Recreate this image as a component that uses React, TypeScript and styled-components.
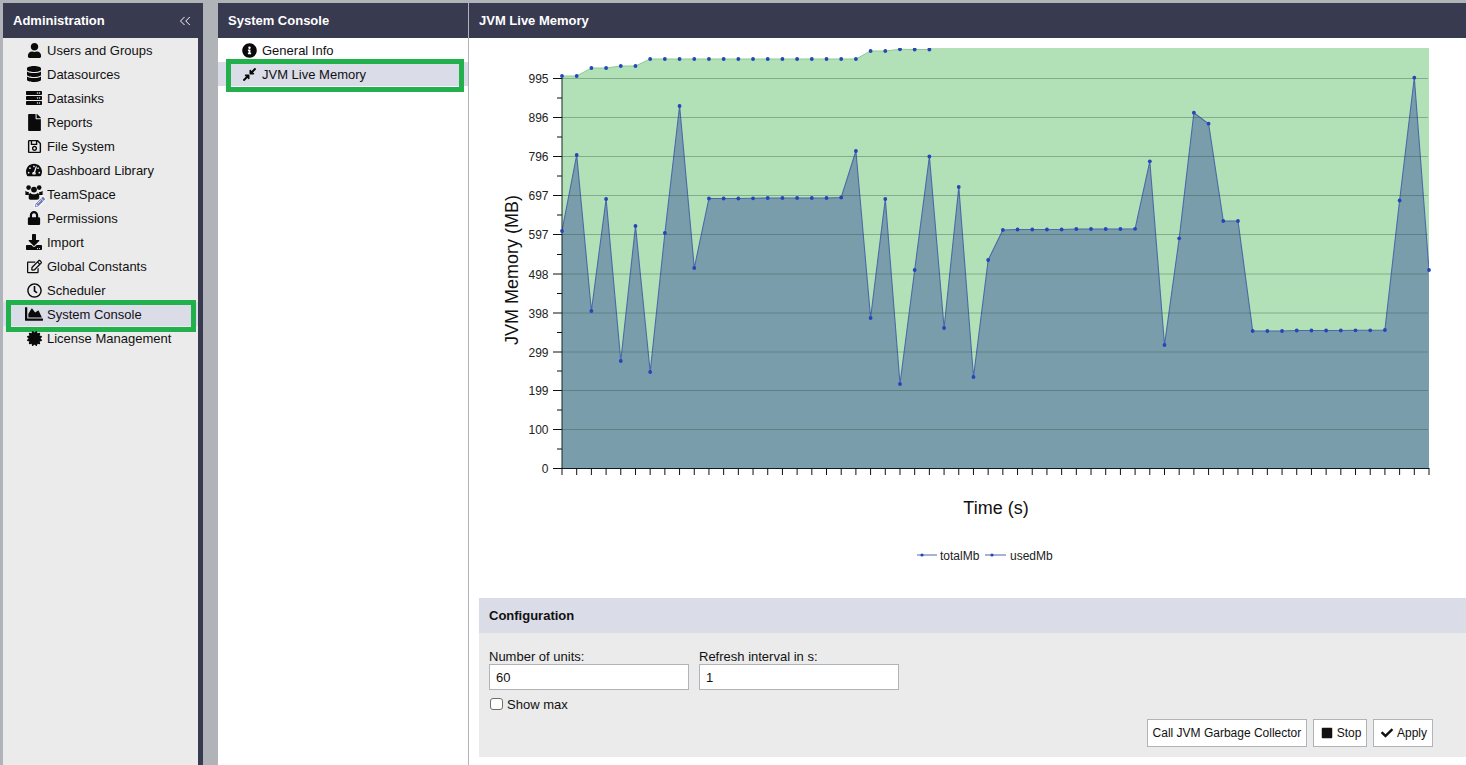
import React from "react";
import styled, { createGlobalStyle } from "styled-components";
import {
  FaUser, FaDatabase, FaServer, FaFile, FaRegSave, FaTachometerAlt, FaPencilAlt, FaLock,
  FaDownload, FaRegEdit, FaRegClock, FaChartArea, FaCertificate, FaInfoCircle, FaCompressAlt,
  FaStop, FaCheck,
} from "react-icons/fa";
import { ChevronsLeft } from "lucide-react";

const Global = createGlobalStyle`
  html, body { margin: 0; padding: 0; height: 765px; overflow: hidden; background: #b0b4b8; }
  body, input, button { font-family: "Liberation Sans", Arial, sans-serif; font-size: 13px; color: #111; }
  #root { height: 765px; }
`;

const Page = styled.div`
  display: flex;
  height: 762px;
  padding: 3px 0 0 3px;
`;
const Header = styled.div`
  height: 35px;
  flex: none;
  display: flex;
  align-items: center;
  justify-content: space-between;
  padding: 0 10px;
  background: #383a50;
  color: #fff;
  font-weight: 700;
  font-size: 13px;
`;
const CollapseBtn = styled.span`
  display: flex;
  margin-right: -1px;
  color: #fff;
`;
const AdminColumn = styled.aside`
  width: 200px;
  flex: none;
  display: flex;
  flex-direction: column;
  margin-right: 15px;
`;
const AdminList = styled.div`
  flex: 1;
  background: #ebebeb;
  border-right: 5px solid #383a50;
`;
const ConsoleColumn = styled.nav`
  width: 250px;
  flex: none;
  display: flex;
  flex-direction: column;
  background: #fff;
  border-right: 1px solid #b0b4b8;
`;
const ConsoleList = styled.div`
  flex: 1;
`;
const Row = styled.div<{ $active?: boolean; $indent: number }>`
  position: relative;
  height: 24px;
  display: flex;
  align-items: center;
  gap: 4px;
  padding-left: ${(p) => p.$indent}px;
  background: ${(p) => (p.$active ? "#dadce8" : "transparent")};
  font-size: 13px;
`;
const Highlight = styled.div<{ $top: number; $left: number; $right: number; $bottom: number }>`
  position: absolute;
  top: ${(p) => p.$top}px;
  left: ${(p) => p.$left}px;
  right: ${(p) => p.$right}px;
  bottom: ${(p) => p.$bottom}px;
  border: 5px solid #22b04c;
  pointer-events: none;
`;
const IconBox = styled.span<{ $size?: number }>`
  position: relative;
  width: 18px;
  height: 18px;
  flex: none;
  display: flex;
  align-items: center;
  justify-content: center;
  font-size: ${(p) => p.$size ?? 15}px;
  color: #0a0a0a;
`;
const TeamGlyph = styled.svg`
  width: 18px;
  height: 18px;
  margin-top: -2px;
  flex: none;
`;
const PencilBadge = styled.span`
  position: absolute;
  right: -2px;
  bottom: -4px;
  display: flex;
  font-size: 10px;
  color: #6f78b4;
  filter: drop-shadow(0 0 1px #fff) drop-shadow(0 0 1px #fff);
`;
const Main = styled.main`
  flex: 1;
  min-width: 0;
  display: flex;
  flex-direction: column;
  background: #fff;
`;
const Chart = styled.svg`
  display: block;
  width: 997px;
  height: 560px;
  flex: none;
  font-family: "Liberation Sans", Arial, sans-serif;
`;
const ConfigPanel = styled.section`
  margin-left: 10px;
  height: 159px;
  flex: none;
  display: flex;
  flex-direction: column;
  background: #ebebeb;
`;
const ConfigHeader = styled.div`
  height: 35px;
  flex: none;
  display: flex;
  align-items: center;
  padding-left: 10px;
  background: #dadce8;
  font-weight: 700;
`;
const ConfigBody = styled.div`
  flex: 1;
  padding: 16px 33px 10px 10px;
  display: flex;
  flex-direction: column;
`;
const Fields = styled.div`
  display: flex;
  gap: 10px;
`;
const Field = styled.label`
  display: flex;
  flex-direction: column;
  width: 200px;
  line-height: 15px;
`;
const TextInput = styled.input`
  box-sizing: border-box;
  width: 200px;
  height: 26px;
  margin-top: 0;
  padding: 0 6px;
  border: 1px solid #b0b4b8;
  background: #fff;
  font-size: 13px;
  outline: none;
`;
const CheckRow = styled.label`
  display: flex;
  align-items: center;
  gap: 4px;
  height: 15px;
  margin-top: 7px;
`;
const Check = styled.input`
  appearance: none;
  box-sizing: border-box;
  width: 13px;
  height: 12px;
  margin: -2px 0 0 1px;
  border: 1px solid #6e6e6e;
  border-radius: 3px;
  background: #fff;
`;
const Buttons = styled.div`
  display: flex;
  justify-content: flex-end;
  gap: 6px;
  margin-top: 7px;
`;
const Button = styled.button`
  box-sizing: border-box;
  height: 28px;
  padding: 0 5px;
  display: flex;
  align-items: center;
  gap: 4px;
  border: 1px solid #b0b4b8;
  background: #fff;
  font-size: 12px;
  color: #111;
  white-space: nowrap;
  svg { width: 12px; height: 12px; margin-left: 1.5px; }
`;

const TeamIcon = () => (
  <TeamGlyph viewBox="0 0 18 18" fill="#0a0a0a">
    <circle cx="3.6" cy="3.6" r="2.3" />
    <circle cx="14.2" cy="3.6" r="2.3" />
    <circle cx="9" cy="5.6" r="2.9" />
    <path d="M0.4 6.8c.9.9 2 1.3 3.4 1.2-.3 1-.1 2 .5 2.9H0.4V6.8zM17.6 6.8v4.1h-3.9c.6-.9.8-1.9.5-2.9 1.4.1 2.5-.3 3.4-1.2z" />
    <path d="M5.1 8.8c1 1 2.4 1.5 3.9 1.5s2.900-.5 3.900-1.500c1 .9 1.400 2.300 1.400 4v1.200c0 1-.7 1.700-1.700 1.700H5.400c-1 0-1.700-.7-1.700-1.700v-1.200c0-1.700.400-3.100 1.400-4z" />
  </TeamGlyph>
);

const adminItems: [React.ReactNode, string, number][] = [
  [<FaUser />, "Users and Groups", 15],
  [<FaDatabase />, "Datasources", 16],
  [<FaServer />, "Datasinks", 16],
  [<FaFile />, "Reports", 17],
  [<FaRegSave />, "File System", 15],
  [<FaTachometerAlt />, "Dashboard Library", 16],
  [<><TeamIcon /><PencilBadge><FaPencilAlt /></PencilBadge></>, "TeamSpace", 15],
  [<FaLock />, "Permissions", 14],
  [<FaDownload />, "Import", 16],
  [<FaRegEdit />, "Global Constants", 15],
  [<FaRegClock />, "Scheduler", 15],
  [<FaChartArea />, "System Console", 18],
  [<FaCertificate />, "License Management", 15],
];

const X0 = 562;
const STEP = 867 / 59;
const TOTAL = [76,76,68,68,66,66,59,59,59,59,59,59,59,59,59,59,59,59,59,59,59,51,51,49.3,49.5,49.5,
  30,30,30,30,30,30,30,30,30,30,30,30,30,30,30,30,30,30,30,30,30,30,30,30,30,30,30,30,30,30,30,30,30,30];
const USED = [231,155,311,199,361,226,372,233,106,268,198.5,198.5,198.5,198.3,198,198,198,198,198,197.5,151,318,199,384,270,156.5,328,187,377,260,
  230,229.5,229.5,229.5,229.5,229,229,229,229,228.8,161.3,345,238.3,112.7,123.7,221,221,331,331,331,330.5,330.5,330.5,330.5,330.3,330.3,330,200.5,77.7,270];
const LABELS: [string, number][] = [["995",78.5],["896",117.5],["796",156.5],["697",195.5],["597",234.5],["498",274],["398",313],["299",352],["199",390.5],["100",429.5],["0",468.5]];

const px = (i: number) => X0 + i * STEP;
const linePts = (a: number[]) => a.map((y, i) => `${px(i).toFixed(1)},${y}`).join(" ");
const areaPts = (a: number[]) => `${X0},468 ${linePts(a)} ${X0 + 867},468`;

const MemoryChart = () => (
  <Chart viewBox="469 38 997 560" xmlns="http://www.w3.org/2000/svg">
    <defs>
      <clipPath id="plot"><rect x={558} y={48} width={874} height={424} /></clipPath>
      <clipPath id="area"><rect x={562} y={48} width={867} height={420} /></clipPath>
    </defs>
    <polygon points={areaPts(TOTAL)} fill="#b2e0b7" clipPath="url(#area)" />
    <polyline points={linePts(TOTAL)} fill="none" stroke="#8ccb92" strokeWidth={1} clipPath="url(#area)" />
    <polygon points={areaPts(USED)} fill="#7a9dac" clipPath="url(#area)" />
    <polyline points={linePts(USED)} fill="none" stroke="#4c69a8" strokeWidth={1.1} clipPath="url(#area)" />
    {LABELS.slice(0, -1).map(([, y]) => (
      <line key={y} x1={562} x2={1428} y1={y} y2={y} stroke="#2a4a3a" strokeOpacity={0.35} strokeWidth={1} />
    ))}
    <line x1={562} x2={562} y1={78} y2={469} stroke="#0e2a24" strokeWidth={1} />
    <line x1={553} x2={1429} y1={468.5} y2={468.5} stroke="#0c1c20" strokeWidth={1} />
    {LABELS.map(([t, y], i) => (
      <g key={t}>
        <line x1={553} x2={562} y1={y} y2={y} stroke="#111" />
        {i > 0 && <line x1={557} x2={562} y1={y - 19.5} y2={y - 19.5} stroke="#111" />}
        <text x={548.5} y={y + 4.5} textAnchor="end" fontSize={12} fill="#222">{t}</text>
      </g>
    ))}
    {USED.map((_, i) => (
      <line key={i} x1={px(i)} x2={px(i)} y1={468} y2={475} stroke="#111" />
    ))}
    <g clipPath="url(#plot)" fill="#2346b8">
      {TOTAL.map((y, i) => <circle key={i} cx={px(i)} cy={y} r={1.9} />)}
      {USED.map((y, i) => <circle key={i} cx={px(i)} cy={y} r={1.9} />)}
    </g>
    <text transform="translate(518 270) rotate(-90)" textAnchor="middle" fontSize={18} fill="#111">JVM Memory (MB)</text>
    <text x={996} y={514} textAnchor="middle" fontSize={18} fill="#111">Time (s)</text>
    <line x1={917} x2={937} y1={555} y2={555} stroke="#4c69a8" />
    <circle cx={922} cy={555} r={1.6} fill="#2346b8" />
    <text x={940} y={560} fontSize={12} fill="#222">totalMb</text>
    <line x1={985} x2={1006} y1={555} y2={555} stroke="#4c69a8" />
    <circle cx={992} cy={555} r={1.6} fill="#2346b8" />
    <text x={1010} y={560} fontSize={12} fill="#222">usedMb</text>
  </Chart>
);

export default function App() {
  return (
    <>
      <Global />
      <Page>
        <AdminColumn>
          <Header>
            Administration
            <CollapseBtn><ChevronsLeft size={18} strokeWidth={1.3} /></CollapseBtn>
          </Header>
          <AdminList>
            {adminItems.map(([icon, label, size]) => (
              <Row key={label} $indent={22} $active={label === "System Console"}>
                <IconBox $size={size}>{icon}</IconBox>
                {label}
                {label === "System Console" && <Highlight $top={-2} $left={3} $right={2} $bottom={-6} />}
              </Row>
            ))}
          </AdminList>
        </AdminColumn>
        <ConsoleColumn>
          <Header>System Console</Header>
          <ConsoleList>
            <Row $indent={22}>
              <IconBox><FaInfoCircle /></IconBox>
              General Info
            </Row>
            <Row $indent={22} $active>
              <IconBox><FaCompressAlt /></IconBox>
              JVM Live Memory
              <Highlight $top={-3} $left={8} $right={4} $bottom={-6} />
            </Row>
          </ConsoleList>
        </ConsoleColumn>
        <Main>
          <Header>JVM Live Memory</Header>
          <MemoryChart />
          <ConfigPanel>
            <ConfigHeader>Configuration</ConfigHeader>
            <ConfigBody>
              <Fields>
                <Field>
                  Number of units:
                  <TextInput defaultValue="60" />
                </Field>
                <Field>
                  Refresh interval in s:
                  <TextInput defaultValue="1" />
                </Field>
              </Fields>
              <CheckRow>
                <Check type="checkbox" />
                Show max
              </CheckRow>
              <Buttons>
                <Button>Call JVM Garbage Collector</Button>
                <Button><FaStop />Stop</Button>
                <Button><FaCheck />Apply</Button>
              </Buttons>
            </ConfigBody>
          </ConfigPanel>
        </Main>
      </Page>
    </>
  );
}
